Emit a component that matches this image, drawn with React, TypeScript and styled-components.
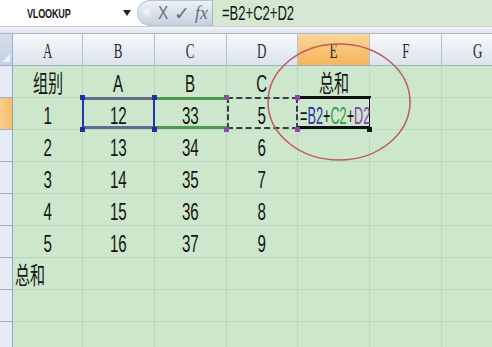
import React from "react";
import styled, { createGlobalStyle, css } from "styled-components";

const GlobalStyle = createGlobalStyle`
  html, body { margin: 0; padding: 0; background: #cde7cc; }
  body { width: 492px; height: 347px; overflow: hidden; }
`;

const Window = styled.div`
  position: relative;
  width: 492px;
  height: 347px;
  overflow: hidden;
  display: flex;
  flex-direction: column;
  background: #cde7cc;
`;

const FormulaBar = styled.div`
  display: flex;
  height: 26px;
  flex: none;
  background: #ffffff;
`;

const NameBox = styled.div`
  width: 137px;
  display: flex;
  align-items: center;
  padding-left: 27px;
  box-sizing: border-box;
  background: #ffffff;
`;

const NameText = styled.span`
  display: inline-block;
  font-family: "Liberation Sans", sans-serif;
  font-weight: bold;
  font-size: 13px;
  color: #1a1a1a;
  transform: scaleX(0.7);
  transform-origin: left center;
  letter-spacing: -0.3px;
`;

const DropArrow = styled.span`
  margin-left: auto;
  margin-right: 6px;
  width: 0;
  height: 0;
  border-left: 4px solid transparent;
  border-right: 4px solid transparent;
  border-top: 6px solid #222;
`;

const ButtonGroup = styled.div`
  width: 75px;
  display: flex;
  align-items: center;
  gap: 5px;
  padding-left: 5px;
  box-sizing: border-box;
  border-radius: 13px 0 0 13px;
  background: linear-gradient(#eef2f7, #d6dde8 60%, #c8d2df);
  border: 1px solid #b8c4d2;
  border-right: none;
`;

const Orb = styled.span`
  width: 9px;
  height: 14px;
  border-radius: 50%;
  background: radial-gradient(circle at 40% 40%, #f6f8fa, #c6cfdb);
`;

const IconText = styled.span<{ $kind: "x" | "check" | "fx" }>`
  display: inline-block;
  font-family: ${(p) =>
    p.$kind === "fx" ? '"Liberation Serif", serif' : p.$kind === "x" ? '"Liberation Sans", sans-serif' : '"DejaVu Sans", sans-serif'};
  font-style: ${(p) => (p.$kind === "fx" ? "italic" : "normal")};
  font-size: ${(p) => (p.$kind === "fx" ? "18px" : p.$kind === "x" ? "18px" : "19px")};
  color: #67707c;
  line-height: 1;
  transform: ${(p) => (p.$kind === "x" ? "scaleX(0.85)" : "none")};
`;

const FormulaInput = styled.div`
  flex: 1;
  display: flex;
  align-items: center;
  padding-left: 9px;
  background: #d5e9d2;
  border-left: 1px solid #a8b6c5;
`;

const FormulaText = styled.span`
  display: inline-block;
  font-family: "Liberation Sans", sans-serif;
  font-size: 21px;
  color: #111;
  transform: scaleX(0.62);
  transform-origin: left center;
`;

const Strip = styled.div`
  height: 6px;
  flex: none;
  background: linear-gradient(#f2f4f7, #dfe5ec);
  border-top: 1px solid #c8d1dc;
  border-bottom: 1px solid #a9b8ca;
`;

const Grid = styled.div`
  display: grid;
  grid-template-columns: 13px 70px 72px 72px 71px 72px 72px 72px;
  grid-template-rows: 32px;
  grid-auto-rows: 32px;
`;

const HeaderCell = styled.div<{ $active?: boolean }>`
  display: flex;
  align-items: center;
  justify-content: center;
  box-sizing: border-box;
  border-right: 1px solid #b4c1d1;
  border-bottom: 1px solid #9fb0c6;
  background: ${(p) =>
    p.$active
      ? "linear-gradient(#fbd89d, #f8c274 55%, #f6b55c)"
      : "linear-gradient(#f7f9fb, #e8edf3 55%, #dce3ec)"};
`;

const Corner = styled.div`
  position: relative;
  box-sizing: border-box;
  background: linear-gradient(#d3deec, #c3d1e3);
  border-right: 1px solid #9fb0c6;
  border-bottom: 1px solid #9fb0c6;
  &::after {
    content: "";
    position: absolute;
    right: 2px;
    bottom: 3px;
    border-left: 8px solid transparent;
    border-bottom: 8px solid #eef3fa;
  }
`;

const RowHead = styled.div<{ $active?: boolean }>`
  box-sizing: border-box;
  border-right: 1px solid #8ea4c0;
  border-bottom: 1px solid #9fb0c6;
  background: ${(p) => (p.$active ? "linear-gradient(90deg, #f9d08e, #f6bc6a)" : "#e4ebf5")};
`;

type Mark = "none" | "blue" | "green" | "dashed" | "active";

const markStyles: Record<Mark, ReturnType<typeof css> | string> = {
  none: "",
  blue: css`
    &::after {
      content: "";
      position: absolute;
      inset: -1px -1px 0 -1px;
      border-top: 3px solid #5f6f8c;
      border-bottom: 3px solid #5f6f8c;
      border-left: 2px solid #2335b0;
      border-right: 2px solid #2335b0;
    }
  `,
  green: css`
    &::after {
      content: "";
      position: absolute;
      inset: -1px -1px 0 0;
      border-top: 3px solid #4d9a50;
      border-bottom: 3px solid #4d9a50;
    }
  `,
  dashed: css`
    &::after {
      content: "";
      position: absolute;
      inset: -1px -1px 0 0;
      border: 2px dashed #3b3b4a;
    }
  `,
  active: css`
    &::after {
      content: "";
      position: absolute;
      inset: -2px -2px 0 0;
      border-top: 3px solid #111;
      border-bottom: 3px solid #111;
      border-right: 2px solid #111;
    }
  `,
};

const Cell = styled.div<{ $align?: "left" | "center"; $mark?: Mark }>`
  position: relative;
  display: flex;
  align-items: center;
  justify-content: ${(p) => (p.$align === "left" ? "flex-start" : "center")};
  padding: 5px 0 0 ${(p) => (p.$align === "left" ? "2px" : "0")};
  box-sizing: border-box;
  border-right: 1px solid #bcd6bf;
  border-bottom: 1px solid #bcd6bf;
  background: #cde7cc;
  ${(p) => markStyles[p.$mark || "none"]}
`;

const CellText = styled.span<{ $align?: "left" | "center"; $narrow?: boolean }>`
  display: inline-block;
  position: relative;
  z-index: 2;
  white-space: nowrap;
  font-family: "Liberation Sans", "Noto Sans CJK SC", sans-serif;
  font-size: 24px;
  line-height: 1;
  color: #151515;
  transform: scaleX(${(p) => (p.$narrow ? 0.53 : 0.63)});
  transform-origin: ${(p) => (p.$align === "left" ? "left" : "center")} center;
`;

const ColLetter = styled.span`
  display: inline-block;
  font-family: "Liberation Serif", serif;
  font-size: 21px;
  line-height: 1;
  color: #2a2a2a;
  padding-top: 4px;
  transform: scaleX(0.62);
`;

const Ref = styled.span<{ $c: string }>`
  color: ${(p) => p.$c};
`;

const Handle = styled.span<{ $pos: "tl" | "tr" | "bl" | "br"; $c: string; $s?: number }>`
  position: absolute;
  z-index: 3;
  width: ${(p) => p.$s || 5}px;
  height: ${(p) => p.$s || 5}px;
  background: ${(p) => p.$c};
  ${(p) => (p.$pos[0] === "t" ? "top: -3px;" : "bottom: -3px;")}
  ${(p) => (p.$pos[1] === "l" ? "left: -3px;" : "right: -3px;")}
`;

const Overlay = styled.svg`
  position: absolute;
  left: 0;
  top: 0;
  pointer-events: none;
  z-index: 5;
`;

const cols = ["A", "B", "C", "D", "E", "F", "G"];

const data: string[][] = [
  ["组别", "A", "B", "C", "总和", "", ""],
  ["1", "12", "33", "5", "", "", ""],
  ["2", "13", "34", "6", "", "", ""],
  ["3", "14", "35", "7", "", "", ""],
  ["4", "15", "36", "8", "", "", ""],
  ["5", "16", "37", "9", "", "", ""],
  ["总和", "", "", "", "", "", ""],
  ["", "", "", "", "", "", ""],
  ["", "", "", "", "", "", ""],
];

const BLUE = "#1f2f9e";
const GREEN = "#3f8f45";
const PURPLE = "#9a3fb8";

export default function App() {
  return (
    <Window>
      <GlobalStyle />
      <FormulaBar>
        <NameBox>
          <NameText>VLOOKUP</NameText>
          <DropArrow />
        </NameBox>
        <ButtonGroup>
          <Orb />
          <IconText $kind="x">X</IconText>
          <IconText $kind="check">✓</IconText>
          <IconText $kind="fx">fx</IconText>
        </ButtonGroup>
        <FormulaInput>
          <FormulaText>=B2+C2+D2</FormulaText>
        </FormulaInput>
      </FormulaBar>
      <Strip />
      <Grid>
        <Corner />
        {cols.map((c) => (
          <HeaderCell key={c} $active={c === "E"}>
            <ColLetter>{c}</ColLetter>
          </HeaderCell>
        ))}
        {data.map((row, r) => (
          <React.Fragment key={r}>
            <RowHead $active={r === 1} />
            {row.map((v, c) => {
              const left = r === 6 && c === 0;
              if (r === 1 && c === 1)
                return (
                  <Cell key={c} $mark="blue">
                    <CellText>{v}</CellText>
                    <Handle $pos="tl" $c={BLUE} />
                    <Handle $pos="bl" $c={BLUE} />
                    <Handle $pos="tr" $c={BLUE} />
                    <Handle $pos="br" $c={BLUE} />
                  </Cell>
                );
              if (r === 1 && c === 2)
                return (
                  <Cell key={c} $mark="green">
                    <CellText>{v}</CellText>
                    <Handle $pos="tr" $c={GREEN} />
                    <Handle $pos="br" $c={GREEN} />
                  </Cell>
                );
              if (r === 1 && c === 3)
                return (
                  <Cell key={c} $mark="dashed">
                    <CellText>{v}</CellText>
                    <Handle $pos="tl" $c={PURPLE} $s={4} />
                    <Handle $pos="bl" $c={PURPLE} $s={4} />
                    <Handle $pos="tr" $c={PURPLE} />
                    <Handle $pos="br" $c={PURPLE} />
                  </Cell>
                );
              if (r === 1 && c === 4)
                return (
                  <Cell key={c} $mark="active" $align="left">
                    <CellText $align="left" $narrow>
                      =<Ref $c="#2b2fa6">B2</Ref>+<Ref $c="#2f9a3a">C2</Ref>+
                      <Ref $c="#8a3ab8">D2</Ref>
                    </CellText>
                    <Handle $pos="br" $c="#111" />
                  </Cell>
                );
              return (
                <Cell key={c} $align={left ? "left" : "center"}>
                  {v && <CellText $align={left ? "left" : "center"}>{v}</CellText>}
                </Cell>
              );
            })}
          </React.Fragment>
        ))}
      </Grid>
      <Overlay width={492} height={347} viewBox="0 0 492 347">
        <ellipse cx={339} cy={102} rx={71} ry={58} fill="none" stroke="#c05a5a" strokeWidth={1.5} />
      </Overlay>
    </Window>
  );
}
